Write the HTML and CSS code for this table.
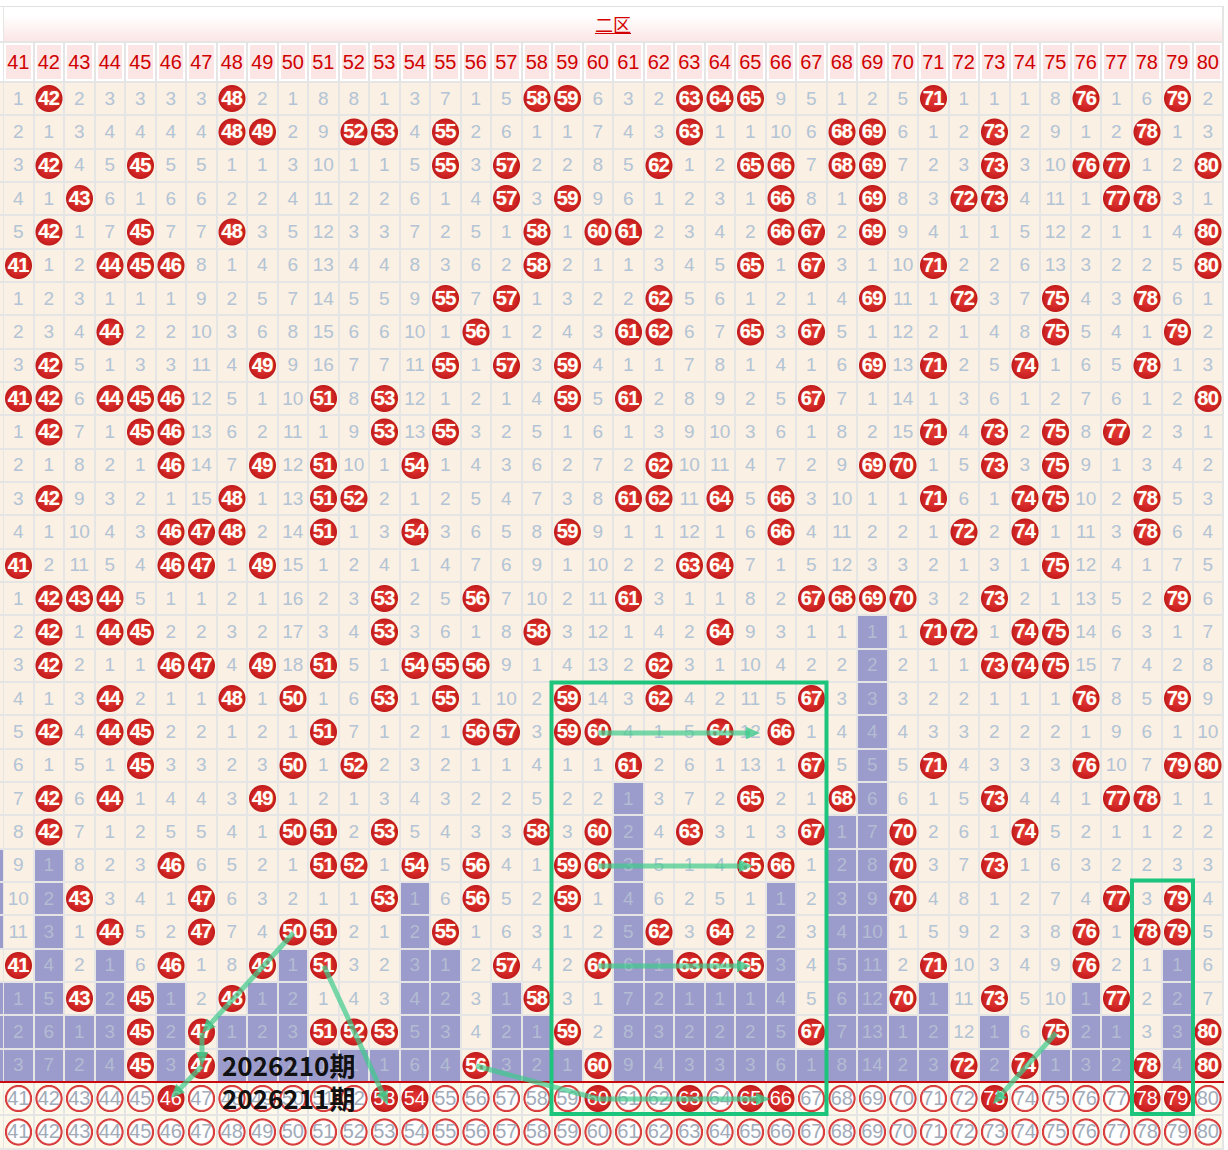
FILE: index.html
```html
<!DOCTYPE html>
<html lang="zh-CN">
<head>
<meta charset="utf-8">
<title>二区 走势图</title>
<link rel="stylesheet" href="styles.css">
</head>
<body>
<div class="wrap">
<div class="tbl">
<div class="r t"><i class="x"></i><div class="zone"><span>二区</span></div></div>
<div class="r h"><i class="x"></i><i>41</i><i>42</i><i>43</i><i>44</i><i>45</i><i>46</i><i>47</i><i>48</i><i>49</i><i>50</i><i>51</i><i>52</i><i>53</i><i>54</i><i>55</i><i>56</i><i>57</i><i>58</i><i>59</i><i>60</i><i>61</i><i>62</i><i>63</i><i>64</i><i>65</i><i>66</i><i>67</i><i>68</i><i>69</i><i>70</i><i>71</i><i>72</i><i>73</i><i>74</i><i>75</i><i>76</i><i>77</i><i>78</i><i>79</i><i>80</i></div>
<div class="r d"><i class="x"></i><i>1</i><b>42</b><i>2</i><i>3</i><i>3</i><i>3</i><i>3</i><b>48</b><i>2</i><i>1</i><i>8</i><i>8</i><i>1</i><i>3</i><i>7</i><i>1</i><i>5</i><b>58</b><b>59</b><i>6</i><i>3</i><i>2</i><b>63</b><b>64</b><b>65</b><i>9</i><i>5</i><i>1</i><i>2</i><i>5</i><b>71</b><i>1</i><i>1</i><i>1</i><i>8</i><b>76</b><i>1</i><i>6</i><b>79</b><i>2</i></div>
<div class="r d"><i class="x"></i><i>2</i><i>1</i><i>3</i><i>4</i><i>4</i><i>4</i><i>4</i><b>48</b><b>49</b><i>2</i><i>9</i><b>52</b><b>53</b><i>4</i><b>55</b><i>2</i><i>6</i><i>1</i><i>1</i><i>7</i><i>4</i><i>3</i><b>63</b><i>1</i><i>1</i><i>10</i><i>6</i><b>68</b><b>69</b><i>6</i><i>1</i><i>2</i><b>73</b><i>2</i><i>9</i><i>1</i><i>2</i><b>78</b><i>1</i><i>3</i></div>
<div class="r d"><i class="x"></i><i>3</i><b>42</b><i>4</i><i>5</i><b>45</b><i>5</i><i>5</i><i>1</i><i>1</i><i>3</i><i>10</i><i>1</i><i>1</i><i>5</i><b>55</b><i>3</i><b>57</b><i>2</i><i>2</i><i>8</i><i>5</i><b>62</b><i>1</i><i>2</i><b>65</b><b>66</b><i>7</i><b>68</b><b>69</b><i>7</i><i>2</i><i>3</i><b>73</b><i>3</i><i>10</i><b>76</b><b>77</b><i>1</i><i>2</i><b>80</b></div>
<div class="r d"><i class="x"></i><i>4</i><i>1</i><b>43</b><i>6</i><i>1</i><i>6</i><i>6</i><i>2</i><i>2</i><i>4</i><i>11</i><i>2</i><i>2</i><i>6</i><i>1</i><i>4</i><b>57</b><i>3</i><b>59</b><i>9</i><i>6</i><i>1</i><i>2</i><i>3</i><i>1</i><b>66</b><i>8</i><i>1</i><b>69</b><i>8</i><i>3</i><b>72</b><b>73</b><i>4</i><i>11</i><i>1</i><b>77</b><b>78</b><i>3</i><i>1</i></div>
<div class="r d"><i class="x"></i><i>5</i><b>42</b><i>1</i><i>7</i><b>45</b><i>7</i><i>7</i><b>48</b><i>3</i><i>5</i><i>12</i><i>3</i><i>3</i><i>7</i><i>2</i><i>5</i><i>1</i><b>58</b><i>1</i><b>60</b><b>61</b><i>2</i><i>3</i><i>4</i><i>2</i><b>66</b><b>67</b><i>2</i><b>69</b><i>9</i><i>4</i><i>1</i><i>1</i><i>5</i><i>12</i><i>2</i><i>1</i><i>1</i><i>4</i><b>80</b></div>
<div class="r d"><i class="x"></i><b>41</b><i>1</i><i>2</i><b>44</b><b>45</b><b>46</b><i>8</i><i>1</i><i>4</i><i>6</i><i>13</i><i>4</i><i>4</i><i>8</i><i>3</i><i>6</i><i>2</i><b>58</b><i>2</i><i>1</i><i>1</i><i>3</i><i>4</i><i>5</i><b>65</b><i>1</i><b>67</b><i>3</i><i>1</i><i>10</i><b>71</b><i>2</i><i>2</i><i>6</i><i>13</i><i>3</i><i>2</i><i>2</i><i>5</i><b>80</b></div>
<div class="r d"><i class="x"></i><i>1</i><i>2</i><i>3</i><i>1</i><i>1</i><i>1</i><i>9</i><i>2</i><i>5</i><i>7</i><i>14</i><i>5</i><i>5</i><i>9</i><b>55</b><i>7</i><b>57</b><i>1</i><i>3</i><i>2</i><i>2</i><b>62</b><i>5</i><i>6</i><i>1</i><i>2</i><i>1</i><i>4</i><b>69</b><i>11</i><i>1</i><b>72</b><i>3</i><i>7</i><b>75</b><i>4</i><i>3</i><b>78</b><i>6</i><i>1</i></div>
<div class="r d"><i class="x"></i><i>2</i><i>3</i><i>4</i><b>44</b><i>2</i><i>2</i><i>10</i><i>3</i><i>6</i><i>8</i><i>15</i><i>6</i><i>6</i><i>10</i><i>1</i><b>56</b><i>1</i><i>2</i><i>4</i><i>3</i><b>61</b><b>62</b><i>6</i><i>7</i><b>65</b><i>3</i><b>67</b><i>5</i><i>1</i><i>12</i><i>2</i><i>1</i><i>4</i><i>8</i><b>75</b><i>5</i><i>4</i><i>1</i><b>79</b><i>2</i></div>
<div class="r d"><i class="x"></i><i>3</i><b>42</b><i>5</i><i>1</i><i>3</i><i>3</i><i>11</i><i>4</i><b>49</b><i>9</i><i>16</i><i>7</i><i>7</i><i>11</i><b>55</b><i>1</i><b>57</b><i>3</i><b>59</b><i>4</i><i>1</i><i>1</i><i>7</i><i>8</i><i>1</i><i>4</i><i>1</i><i>6</i><b>69</b><i>13</i><b>71</b><i>2</i><i>5</i><b>74</b><i>1</i><i>6</i><i>5</i><b>78</b><i>1</i><i>3</i></div>
<div class="r d"><i class="x"></i><b>41</b><b>42</b><i>6</i><b>44</b><b>45</b><b>46</b><i>12</i><i>5</i><i>1</i><i>10</i><b>51</b><i>8</i><b>53</b><i>12</i><i>1</i><i>2</i><i>1</i><i>4</i><b>59</b><i>5</i><b>61</b><i>2</i><i>8</i><i>9</i><i>2</i><i>5</i><b>67</b><i>7</i><i>1</i><i>14</i><i>1</i><i>3</i><i>6</i><i>1</i><i>2</i><i>7</i><i>6</i><i>1</i><i>2</i><b>80</b></div>
<div class="r d"><i class="x"></i><i>1</i><b>42</b><i>7</i><i>1</i><b>45</b><b>46</b><i>13</i><i>6</i><i>2</i><i>11</i><i>1</i><i>9</i><b>53</b><i>13</i><b>55</b><i>3</i><i>2</i><i>5</i><i>1</i><i>6</i><i>1</i><i>3</i><i>9</i><i>10</i><i>3</i><i>6</i><i>1</i><i>8</i><i>2</i><i>15</i><b>71</b><i>4</i><b>73</b><i>2</i><b>75</b><i>8</i><b>77</b><i>2</i><i>3</i><i>1</i></div>
<div class="r d"><i class="x"></i><i>2</i><i>1</i><i>8</i><i>2</i><i>1</i><b>46</b><i>14</i><i>7</i><b>49</b><i>12</i><b>51</b><i>10</i><i>1</i><b>54</b><i>1</i><i>4</i><i>3</i><i>6</i><i>2</i><i>7</i><i>2</i><b>62</b><i>10</i><i>11</i><i>4</i><i>7</i><i>2</i><i>9</i><b>69</b><b>70</b><i>1</i><i>5</i><b>73</b><i>3</i><b>75</b><i>9</i><i>1</i><i>3</i><i>4</i><i>2</i></div>
<div class="r d"><i class="x"></i><i>3</i><b>42</b><i>9</i><i>3</i><i>2</i><i>1</i><i>15</i><b>48</b><i>1</i><i>13</i><b>51</b><b>52</b><i>2</i><i>1</i><i>2</i><i>5</i><i>4</i><i>7</i><i>3</i><i>8</i><b>61</b><b>62</b><i>11</i><b>64</b><i>5</i><b>66</b><i>3</i><i>10</i><i>1</i><i>1</i><b>71</b><i>6</i><i>1</i><b>74</b><b>75</b><i>10</i><i>2</i><b>78</b><i>5</i><i>3</i></div>
<div class="r d"><i class="x"></i><i>4</i><i>1</i><i>10</i><i>4</i><i>3</i><b>46</b><b>47</b><b>48</b><i>2</i><i>14</i><b>51</b><i>1</i><i>3</i><b>54</b><i>3</i><i>6</i><i>5</i><i>8</i><b>59</b><i>9</i><i>1</i><i>1</i><i>12</i><i>1</i><i>6</i><b>66</b><i>4</i><i>11</i><i>2</i><i>2</i><i>1</i><b>72</b><i>2</i><b>74</b><i>1</i><i>11</i><i>3</i><b>78</b><i>6</i><i>4</i></div>
<div class="r d"><i class="x"></i><b>41</b><i>2</i><i>11</i><i>5</i><i>4</i><b>46</b><b>47</b><i>1</i><b>49</b><i>15</i><i>1</i><i>2</i><i>4</i><i>1</i><i>4</i><i>7</i><i>6</i><i>9</i><i>1</i><i>10</i><i>2</i><i>2</i><b>63</b><b>64</b><i>7</i><i>1</i><i>5</i><i>12</i><i>3</i><i>3</i><i>2</i><i>1</i><i>3</i><i>1</i><b>75</b><i>12</i><i>4</i><i>1</i><i>7</i><i>5</i></div>
<div class="r d"><i class="x"></i><i>1</i><b>42</b><b>43</b><b>44</b><i>5</i><i>1</i><i>1</i><i>2</i><i>1</i><i>16</i><i>2</i><i>3</i><b>53</b><i>2</i><i>5</i><b>56</b><i>7</i><i>10</i><i>2</i><i>11</i><b>61</b><i>3</i><i>1</i><i>1</i><i>8</i><i>2</i><b>67</b><b>68</b><b>69</b><b>70</b><i>3</i><i>2</i><b>73</b><i>2</i><i>1</i><i>13</i><i>5</i><i>2</i><b>79</b><i>6</i></div>
<div class="r d"><i class="x"></i><i>2</i><b>42</b><i>1</i><b>44</b><b>45</b><i>2</i><i>2</i><i>3</i><i>2</i><i>17</i><i>3</i><i>4</i><b>53</b><i>3</i><i>6</i><i>1</i><i>8</i><b>58</b><i>3</i><i>12</i><i>1</i><i>4</i><i>2</i><b>64</b><i>9</i><i>3</i><i>1</i><i>1</i><i class="p">1</i><i>1</i><b>71</b><b>72</b><i>1</i><b>74</b><b>75</b><i>14</i><i>6</i><i>3</i><i>1</i><i>7</i></div>
<div class="r d"><i class="x"></i><i>3</i><b>42</b><i>2</i><i>1</i><i>1</i><b>46</b><b>47</b><i>4</i><b>49</b><i>18</i><b>51</b><i>5</i><i>1</i><b>54</b><b>55</b><b>56</b><i>9</i><i>1</i><i>4</i><i>13</i><i>2</i><b>62</b><i>3</i><i>1</i><i>10</i><i>4</i><i>2</i><i>2</i><i class="p">2</i><i>2</i><i>1</i><i>1</i><b>73</b><b>74</b><b>75</b><i>15</i><i>7</i><i>4</i><i>2</i><i>8</i></div>
<div class="r d"><i class="x"></i><i>4</i><i>1</i><i>3</i><b>44</b><i>2</i><i>1</i><i>1</i><b>48</b><i>1</i><b>50</b><i>1</i><i>6</i><b>53</b><i>1</i><b>55</b><i>1</i><i>10</i><i>2</i><b>59</b><i>14</i><i>3</i><b>62</b><i>4</i><i>2</i><i>11</i><i>5</i><b>67</b><i>3</i><i class="p">3</i><i>3</i><i>2</i><i>2</i><i>1</i><i>1</i><i>1</i><b>76</b><i>8</i><i>5</i><b>79</b><i>9</i></div>
<div class="r d"><i class="x"></i><i>5</i><b>42</b><i>4</i><b>44</b><b>45</b><i>2</i><i>2</i><i>1</i><i>2</i><i>1</i><b>51</b><i>7</i><i>1</i><i>2</i><i>1</i><b>56</b><b>57</b><i>3</i><b>59</b><b>60</b><i>4</i><i>1</i><i>5</i><b>64</b><i>12</i><b>66</b><i>1</i><i>4</i><i class="p">4</i><i>4</i><i>3</i><i>3</i><i>2</i><i>2</i><i>2</i><i>1</i><i>9</i><i>6</i><i>1</i><i>10</i></div>
<div class="r d"><i class="x"></i><i>6</i><i>1</i><i>5</i><i>1</i><b>45</b><i>3</i><i>3</i><i>2</i><i>3</i><b>50</b><i>1</i><b>52</b><i>2</i><i>3</i><i>2</i><i>1</i><i>1</i><i>4</i><i>1</i><i>1</i><b>61</b><i>2</i><i>6</i><i>1</i><i>13</i><i>1</i><b>67</b><i>5</i><i class="p">5</i><i>5</i><b>71</b><i>4</i><i>3</i><i>3</i><i>3</i><b>76</b><i>10</i><i>7</i><b>79</b><b>80</b></div>
<div class="r d"><i class="x"></i><i>7</i><b>42</b><i>6</i><b>44</b><i>1</i><i>4</i><i>4</i><i>3</i><b>49</b><i>1</i><i>2</i><i>1</i><i>3</i><i>4</i><i>3</i><i>2</i><i>2</i><i>5</i><i>2</i><i>2</i><i class="p">1</i><i>3</i><i>7</i><i>2</i><b>65</b><i>2</i><i>1</i><b>68</b><i class="p">6</i><i>6</i><i>1</i><i>5</i><b>73</b><i>4</i><i>4</i><i>1</i><b>77</b><b>78</b><i>1</i><i>1</i></div>
<div class="r d"><i class="x"></i><i>8</i><b>42</b><i>7</i><i>1</i><i>2</i><i>5</i><i>5</i><i>4</i><i>1</i><b>50</b><b>51</b><i>2</i><b>53</b><i>5</i><i>4</i><i>3</i><i>3</i><b>58</b><i>3</i><b>60</b><i class="p">2</i><i>4</i><b>63</b><i>3</i><i>1</i><i>3</i><b>67</b><i class="p">1</i><i class="p">7</i><b>70</b><i>2</i><i>6</i><i>1</i><b>74</b><i>5</i><i>2</i><i>1</i><i>1</i><i>2</i><i>2</i></div>
<div class="r d"><i class="x p"></i><i>9</i><i class="p">1</i><i>8</i><i>2</i><i>3</i><b>46</b><i>6</i><i>5</i><i>2</i><i>1</i><b>51</b><b>52</b><i>1</i><b>54</b><i>5</i><b>56</b><i>4</i><i>1</i><b>59</b><b>60</b><i class="p">3</i><i>5</i><i>1</i><i>4</i><b>65</b><b>66</b><i>1</i><i class="p">2</i><i class="p">8</i><b>70</b><i>3</i><i>7</i><b>73</b><i>1</i><i>6</i><i>3</i><i>2</i><i>2</i><i>3</i><i>3</i></div>
<div class="r d"><i class="x p"></i><i>10</i><i class="p">2</i><b>43</b><i>3</i><i>4</i><i>1</i><b>47</b><i>6</i><i>3</i><i>2</i><i>1</i><i>1</i><b>53</b><i class="p">1</i><i>6</i><b>56</b><i>5</i><i>2</i><b>59</b><i>1</i><i class="p">4</i><i>6</i><i>2</i><i>5</i><i>1</i><i class="p">1</i><i>2</i><i class="p">3</i><i class="p">9</i><b>70</b><i>4</i><i>8</i><i>1</i><i>2</i><i>7</i><i>4</i><b>77</b><i>3</i><b>79</b><i>4</i></div>
<div class="r d"><i class="x p"></i><i>11</i><i class="p">3</i><i>1</i><b>44</b><i>5</i><i>2</i><b>47</b><i>7</i><i>4</i><b>50</b><b>51</b><i>2</i><i>1</i><i class="p">2</i><b>55</b><i>1</i><i>6</i><i>3</i><i>1</i><i>2</i><i class="p">5</i><b>62</b><i>3</i><b>64</b><i>2</i><i class="p">2</i><i>3</i><i class="p">4</i><i class="p">10</i><i>1</i><i>5</i><i>9</i><i>2</i><i>3</i><i>8</i><b>76</b><i>1</i><b>78</b><b>79</b><i>5</i></div>
<div class="r d"><i class="x"></i><b>41</b><i class="p">4</i><i>2</i><i class="p">1</i><i>6</i><b>46</b><i>1</i><i>8</i><b>49</b><i class="p">1</i><b>51</b><i>3</i><i>2</i><i class="p">3</i><i class="p">1</i><i>2</i><b>57</b><i>4</i><i>2</i><b>60</b><i class="p">6</i><i class="p">1</i><b>63</b><b>64</b><b>65</b><i class="p">3</i><i>4</i><i class="p">5</i><i class="p">11</i><i>2</i><b>71</b><i>10</i><i>3</i><i>4</i><i>9</i><b>76</b><i>2</i><i>1</i><i class="p">1</i><i>6</i></div>
<div class="r d"><i class="x p"></i><i class="p">1</i><i class="p">5</i><b>43</b><i class="p">2</i><b>45</b><i class="p">1</i><i>2</i><b>48</b><i class="p">1</i><i class="p">2</i><i>1</i><i>4</i><i>3</i><i class="p">4</i><i class="p">2</i><i>3</i><i class="p">1</i><b>58</b><i>3</i><i>1</i><i class="p">7</i><i class="p">2</i><i class="p">1</i><i class="p">1</i><i class="p">1</i><i class="p">4</i><i>5</i><i class="p">6</i><i class="p">12</i><b>70</b><i class="p">1</i><i>11</i><b>73</b><i>5</i><i>10</i><i class="p">1</i><b>77</b><i>2</i><i class="p">2</i><i>7</i></div>
<div class="r d"><i class="x p"></i><i class="p">2</i><i class="p">6</i><i class="p">1</i><i class="p">3</i><b>45</b><i class="p">2</i><b>47</b><i class="p">1</i><i class="p">2</i><i class="p">3</i><b>51</b><b>52</b><b>53</b><i class="p">5</i><i class="p">3</i><i>4</i><i class="p">2</i><i class="p">1</i><b>59</b><i>2</i><i class="p">8</i><i class="p">3</i><i class="p">2</i><i class="p">2</i><i class="p">2</i><i class="p">5</i><b>67</b><i class="p">7</i><i class="p">13</i><i class="p">1</i><i class="p">2</i><i>12</i><i class="p">1</i><i>6</i><b>75</b><i class="p">2</i><i class="p">1</i><i>3</i><i class="p">3</i><b>80</b></div>
<div class="r d"><i class="x p"></i><i class="p">3</i><i class="p">7</i><i class="p">2</i><i class="p">4</i><b>45</b><i class="p">3</i><b>47</b><i class="p">2</i><i class="p">3</i><i class="p">4</i><i class="p">1</i><i class="p">1</i><i class="p">1</i><i class="p">6</i><i class="p">4</i><b>56</b><i class="p">3</i><i class="p">2</i><i class="p">1</i><b>60</b><i class="p">9</i><i class="p">4</i><i class="p">3</i><i class="p">3</i><i class="p">3</i><i class="p">6</i><i class="p">1</i><i class="p">8</i><i class="p">14</i><i class="p">2</i><i class="p">3</i><b>72</b><i class="p">2</i><b>74</b><i class="p">1</i><i class="p">3</i><i class="p">2</i><b>78</b><i class="p">4</i><b>80</b></div>
<div class="r c cur"><i class="x"></i><em>41</em><em>42</em><em>43</em><em>44</em><em>45</em><em class="f">46</em><em>47</em><em>48</em><em>49</em><em>50</em><em>51</em><em>52</em><em class="f">53</em><em class="f">54</em><em>55</em><em>56</em><em>57</em><em>58</em><em>59</em><em class="f">60</em><em>61</em><em>62</em><em class="f">63</em><em>64</em><em class="f">65</em><em class="f">66</em><em>67</em><em>68</em><em>69</em><em>70</em><em>71</em><em>72</em><em class="f">73</em><em>74</em><em>75</em><em>76</em><em>77</em><em class="f">78</em><em class="f">79</em><em>80</em></div>
<div class="r c foot"><i class="x"></i><em>41</em><em>42</em><em>43</em><em>44</em><em>45</em><em>46</em><em>47</em><em>48</em><em>49</em><em>50</em><em>51</em><em>52</em><em>53</em><em>54</em><em>55</em><em>56</em><em>57</em><em>58</em><em>59</em><em>60</em><em>61</em><em>62</em><em>63</em><em>64</em><em>65</em><em>66</em><em>67</em><em>68</em><em>69</em><em>70</em><em>71</em><em>72</em><em>73</em><em>74</em><em>75</em><em>76</em><em>77</em><em>78</em><em>79</em><em>80</em></div>
</div>
<svg class="ov" width="1228" height="1150" viewBox="0 0 1228 1150" xmlns="http://www.w3.org/2000/svg">
<defs>
<marker id="ar" viewBox="0 0 10 10" refX="3" refY="5" markerWidth="14" markerHeight="14" markerUnits="userSpaceOnUse" orient="auto"><path d="M0 0.6L10 5L0 9.4z" fill="#3fca8c" fill-opacity="0.8"/></marker>
</defs>
<g fill="none" stroke="#1dc47c" stroke-width="4">
<rect x="551.5" y="682.5" width="275" height="431.5"/>
<rect x="1132" y="880.5" width="61" height="233.5"/>
</g>
<g fill="none" stroke="#3fca8c" stroke-opacity="0.7" stroke-width="5" marker-end="url(#ar)">
<line x1="293.5" y1="933" x2="208.6" y2="1025.8"/>
<line x1="202" y1="1033" x2="202" y2="1056.2"/>
<line x1="202" y1="1066" x2="177.8" y2="1091"/>
<line x1="324" y1="966" x2="383.9" y2="1096.1"/>
<polyline points="476.5,1066 598.5,1099 760.2,1099"/>
<line x1="598.5" y1="733" x2="750.2" y2="733"/>
<line x1="598.5" y1="866" x2="743.2" y2="866"/>
<line x1="598.5" y1="966" x2="741.2" y2="966"/>
<line x1="1056" y1="1033" x2="999.5" y2="1096.7"/>
</g>
</svg>
<div class="periods"><p>2026210期</p><p>2026211期</p></div>
</div>
</body>
</html>
```

FILE: styles.css
```css
* { box-sizing: border-box; margin: 0; padding: 0; }
body { margin: 0; background: #fff; }
.wrap {
  position: relative;
  width: 1228px;
  height: 1150px;
  overflow: hidden;
  padding-top: 6px;
  font-family: "Liberation Sans", Arial, sans-serif;
}
.tbl { width: 1225px; }
.r {
  display: grid;
  grid-template-columns: 4px repeat(40, 30.5px);
  width: 1224px;
}
.r > * {
  display: flex;
  align-items: center;
  justify-content: center;
  font-style: normal;
  border-right: 2px solid #e5e5e5;
  border-bottom: 2px solid #e5e5e5;
}
.r > .x { border-right-width: 1.5px; }
.t { height: 37px; border-top: 1px solid #e2e2e2; }
.zone {
  grid-column: span 40;
  background: linear-gradient(#fff 0%, #fff 25%, #fce6e6 100%);
  color: #d40000;
  font: 18px "Noto Sans CJK SC", sans-serif;
}
.zone span { text-decoration: underline; }
.h { height: 40px; }
.h i {
  background: #fbe5e5;
  box-shadow: inset 0 0 0 2px #fff;
  color: #d00000;
  font-size: 20px;
}
.h i.x, .t i.x { background: #fff; box-shadow: none; }
.d { height: 33.333px; }
.d i {
  background: #fbf0e4;
  color: #b2c4d5;
  font-size: 19px;
}
.d i.p { background: #9b9bcc; color: #b3bcd2; }
.d b {
  background: radial-gradient(circle at 50% 50%, #e23834 0, #d72c2b 7px, #cc2121 11px, #c01b1b 13px, rgba(192,27,27,0) 14px), #fbf0e4;
  color: #fff;
  font-size: 20px;
  font-weight: bold;
  letter-spacing: -0.5px;
  text-shadow: 0 0 1px rgba(255,220,120,.7);
}
.cur {
  position: relative;
  height: 35px;
  margin-top: -2px;
  border-top: 2px solid #c80c10;
}
.foot { height: 34px; }
.c em {
  font-style: normal;
  background: radial-gradient(circle at 50% 50%, #fff 0, #fff 10.8px, #f0b8b8 11.4px, #dc4444 12px, #d63838 13.2px, rgba(214,56,56,0) 14px), #fdf9ea;
  color: #a1abb9;
  font-size: 20px;
}
.c em.f {
  background: radial-gradient(circle at 50% 50%, #e23834 0, #d72c2b 7px, #cc2121 11px, #c01b1b 13px, rgba(192,27,27,0) 14px), #fdf9ea;
  color: #fff;
}
.c i.x { background: #fdf9ea; }
.d i.x { background: #fbf0e4; }
.d i.x.p { background: #9b9bcc; }
.ov {
  position: absolute;
  left: 0;
  top: 0;
  pointer-events: none;
}
.periods {
  position: absolute;
  left: 222px;
  top: 1048px;
  font: bold 26px/33px "Noto Sans CJK SC", sans-serif;
  color: #111;
}
```
